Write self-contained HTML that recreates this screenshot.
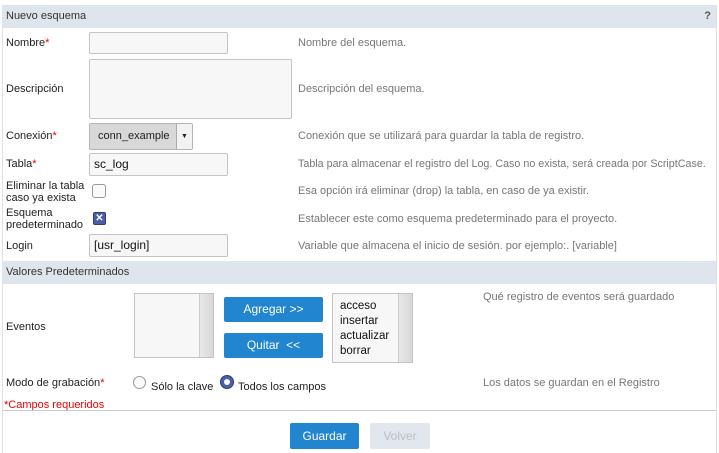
<!DOCTYPE html>
<html><head><meta charset="utf-8"><style>
*{box-sizing:border-box;margin:0;padding:0}
body{width:719px;height:453px;background:#fff;font-family:"Liberation Sans",Arial,sans-serif;font-size:11px;color:#222;position:relative;overflow:hidden}
.a{position:absolute;white-space:nowrap}
.box{position:absolute;border:1px solid #c4c4c4;background:#f7f7f7;border-radius:2px}
.d{position:absolute;color:#777;font-size:11px;white-space:nowrap}
.r{color:#e00}
.hd{position:absolute;left:2px;width:714px;background:#dfe5ed;color:#333;font-size:11px;padding-left:4px}
.btn{position:absolute;background:#2185d0;color:#fff;font-size:12px;text-align:center;border-radius:2px}
.inp{font-size:12px;padding-left:4px;line-height:20px;color:#111}
</style></head><body>
<div class="a" style="left:2px;top:5px;width:715px;height:448px;border-left:1px solid #dde1e6;border-right:1px solid #dde1e6"></div>
<div class="hd" style="top:5px;height:23px;line-height:23px">Nuevo esquema<span style="position:absolute;right:5px;font-weight:bold;color:#555">?</span></div>

<div class="a" style="left:6px;top:37px">Nombre<span class="r">*</span></div>
<div class="box" style="left:89px;top:32px;width:139px;height:22px"></div>
<div class="d" style="left:298px;top:37px">Nombre del esquema.</div>

<div class="a" style="left:6px;top:83px">Descripción</div>
<div class="box" style="left:89px;top:59px;width:203px;height:60px"></div>
<div class="d" style="left:298px;top:83px">Descripción del esquema.</div>

<div class="a" style="left:6px;top:130px">Conexión<span class="r">*</span></div>
<div class="a" style="left:89px;top:123px;width:104px;height:27px;background:#d8d8d8;border:1px solid #b5b5b5;border-radius:2px;font-size:11px;line-height:25px;padding-left:8px">conn_example<span style="position:absolute;right:0;top:0;width:16px;height:25px;background:#f2f2f2;border-left:1px solid #aaa;font-size:7px;text-align:center">▼</span></div>
<div class="d" style="left:298px;top:130px">Conexión que se utilizará para guardar la tabla de registro.</div>

<div class="a" style="left:6px;top:158px">Tabla<span class="r">*</span></div>
<div class="box inp" style="left:89px;top:153px;width:139px;height:23px">sc_log</div>
<div class="d" style="left:298px;top:158px;transform:scaleX(0.975);transform-origin:0 0">Tabla para almacenar el registro del Log. Caso no exista, será creada por ScriptCase.</div>

<div class="a" style="left:6px;top:180px;line-height:12px">Eliminar la tabla<br>caso ya exista</div>
<div class="a" style="left:92px;top:184px;width:14px;height:14px;border:1px solid #999;border-radius:3px;background:#fafafa"></div>
<div class="d" style="left:298px;top:185px">Esa opción irá eliminar (drop) la tabla, en caso de ya existir.</div>

<div class="a" style="left:6px;top:207px;line-height:12px">Esquema<br>predeterminado</div>
<div class="a" style="left:93px;top:212px;width:13px;height:13px;background:#4a5fa8;border:1px solid #2d3d7a;border-radius:2px;color:#fff;font-size:10px;line-height:11px;text-align:center;font-weight:bold">✕</div>
<div class="d" style="left:298px;top:213px">Establecer este como esquema predeterminado para el proyecto.</div>

<div class="a" style="left:6px;top:240px">Login</div>
<div class="box inp" style="left:89px;top:234px;width:139px;height:23px">[usr_login]</div>
<div class="d" style="left:298px;top:240px">Variable que almacena el inicio de sesión. por ejemplo:. [variable]</div>

<div class="hd" style="top:261px;height:23px;line-height:22px">Valores Predeterminados</div>

<div class="a" style="left:6px;top:321px">Eventos</div>
<div class="box" style="left:134px;top:293px;width:80px;height:65px;border-radius:0;background:#f7f7f7"><div style="position:absolute;right:0;top:0;width:14px;height:63px;background:linear-gradient(90deg,#e8e8e8,#d8d8d8);border-left:1px solid #ccc"></div></div>
<div class="btn" style="left:224px;top:297px;width:99px;height:25px;line-height:25px">Agregar &gt;&gt;</div>
<div class="btn" style="left:224px;top:333px;width:99px;height:25px;line-height:25px">Quitar &nbsp;&lt;&lt;</div>
<div class="box" style="left:332px;top:293px;width:81px;height:70px;border-radius:0;font-size:11.5px;line-height:15px;padding:5px 0 0 7px;color:#111">acceso<br>insertar<br>actualizar<br>borrar<div style="position:absolute;right:0;top:0;width:14px;height:68px;background:linear-gradient(90deg,#e8e8e8,#d8d8d8);border-left:1px solid #ccc"></div></div>
<div class="d" style="left:483px;top:291px">Qué registro de eventos será guardado</div>

<div class="a" style="left:6px;top:377px">Modo de grabación<span class="r">*</span></div>
<div class="a" style="left:133px;top:376px;width:13px;height:13px;border:1px solid #999;border-radius:50%;background:#fafafa"></div>
<div class="a" style="left:151px;top:381px">Sólo la clave</div>
<div class="a" style="left:220px;top:375px;width:14px;height:14px;border-radius:50%;background:#4a5fa8;border:1px solid #2d3d7a"><div style="position:absolute;left:3px;top:3px;width:6px;height:6px;border-radius:50%;background:#fff"></div></div>
<div class="a" style="left:238px;top:381px">Todos los campos</div>
<div class="d" style="left:483px;top:377px">Los datos se guardan en el Registro</div>

<div class="a r" style="left:4px;top:399px">*Campos requeridos</div>
<div class="a" style="left:3px;top:410px;width:713px;height:1px;background:#c8ccd2"></div>

<div class="btn" style="left:290px;top:423px;width:69px;height:26px;line-height:26px">Guardar</div>
<div class="btn" style="left:370px;top:423px;width:60px;height:26px;line-height:26px;background:#e2e7ed;color:#b8c0c8">Volver</div>
</body></html>
